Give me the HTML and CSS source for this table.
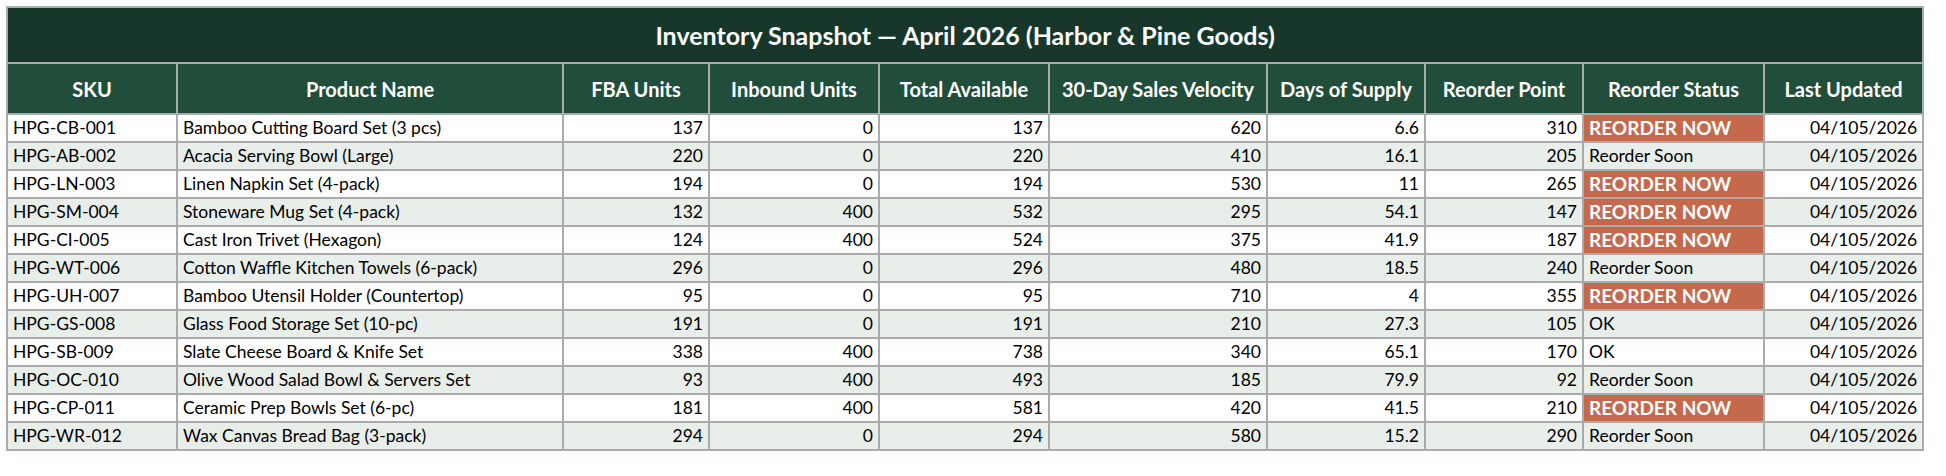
FILE: index.html
```html
<!DOCTYPE html>
<html lang="en">
<head>
<meta charset="utf-8">
<title>Inventory Snapshot</title>
<link rel="stylesheet" href="styles.css">
</head>
<body>
<table class="sheet">
  <colgroup>
    <col class="c-sku"><col class="c-name"><col class="c-fba"><col class="c-inb"><col class="c-tot">
    <col class="c-vel"><col class="c-days"><col class="c-rp"><col class="c-rs"><col class="c-upd">
  </colgroup>
  <thead>
    <tr class="title-row"><th colspan="10" class="title">Inventory Snapshot — April 2026 (Harbor &amp; Pine Goods)</th></tr>
    <tr class="head-row">
      <th>SKU</th><th>Product Name</th><th>FBA Units</th><th>Inbound Units</th><th>Total Available</th>
      <th>30-Day Sales Velocity</th><th>Days of Supply</th><th>Reorder Point</th><th>Reorder Status</th><th>Last Updated</th>
    </tr>
  </thead>
  <tbody>
    <tr><td>HPG-CB-001</td><td>Bamboo Cutting Board Set (3 pcs)</td><td class="n">137</td><td class="n">0</td><td class="n">137</td><td class="n">620</td><td class="n">6.6</td><td class="n">310</td><td class="now">REORDER NOW</td><td class="n">04/105/2026</td></tr>
    <tr><td>HPG-AB-002</td><td>Acacia Serving Bowl (Large)</td><td class="n">220</td><td class="n">0</td><td class="n">220</td><td class="n">410</td><td class="n">16.1</td><td class="n">205</td><td>Reorder Soon</td><td class="n">04/105/2026</td></tr>
    <tr><td>HPG-LN-003</td><td>Linen Napkin Set (4-pack)</td><td class="n">194</td><td class="n">0</td><td class="n">194</td><td class="n">530</td><td class="n">11</td><td class="n">265</td><td class="now">REORDER NOW</td><td class="n">04/105/2026</td></tr>
    <tr><td>HPG-SM-004</td><td>Stoneware Mug Set (4-pack)</td><td class="n">132</td><td class="n">400</td><td class="n">532</td><td class="n">295</td><td class="n">54.1</td><td class="n">147</td><td class="now">REORDER NOW</td><td class="n">04/105/2026</td></tr>
    <tr><td>HPG-CI-005</td><td>Cast Iron Trivet (Hexagon)</td><td class="n">124</td><td class="n">400</td><td class="n">524</td><td class="n">375</td><td class="n">41.9</td><td class="n">187</td><td class="now">REORDER NOW</td><td class="n">04/105/2026</td></tr>
    <tr><td>HPG-WT-006</td><td>Cotton Waffle Kitchen Towels (6-pack)</td><td class="n">296</td><td class="n">0</td><td class="n">296</td><td class="n">480</td><td class="n">18.5</td><td class="n">240</td><td>Reorder Soon</td><td class="n">04/105/2026</td></tr>
    <tr><td>HPG-UH-007</td><td>Bamboo Utensil Holder (Countertop)</td><td class="n">95</td><td class="n">0</td><td class="n">95</td><td class="n">710</td><td class="n">4</td><td class="n">355</td><td class="now">REORDER NOW</td><td class="n">04/105/2026</td></tr>
    <tr><td>HPG-GS-008</td><td>Glass Food Storage Set (10-pc)</td><td class="n">191</td><td class="n">0</td><td class="n">191</td><td class="n">210</td><td class="n">27.3</td><td class="n">105</td><td>OK</td><td class="n">04/105/2026</td></tr>
    <tr><td>HPG-SB-009</td><td>Slate Cheese Board &amp; Knife Set</td><td class="n">338</td><td class="n">400</td><td class="n">738</td><td class="n">340</td><td class="n">65.1</td><td class="n">170</td><td>OK</td><td class="n">04/105/2026</td></tr>
    <tr><td>HPG-OC-010</td><td>Olive Wood Salad Bowl &amp; Servers Set</td><td class="n">93</td><td class="n">400</td><td class="n">493</td><td class="n">185</td><td class="n">79.9</td><td class="n">92</td><td>Reorder Soon</td><td class="n">04/105/2026</td></tr>
    <tr><td>HPG-CP-011</td><td>Ceramic Prep Bowls Set (6-pc)</td><td class="n">181</td><td class="n">400</td><td class="n">581</td><td class="n">420</td><td class="n">41.5</td><td class="n">210</td><td class="now">REORDER NOW</td><td class="n">04/105/2026</td></tr>
    <tr><td>HPG-WR-012</td><td>Wax Canvas Bread Bag (3-pack)</td><td class="n">294</td><td class="n">0</td><td class="n">294</td><td class="n">580</td><td class="n">15.2</td><td class="n">290</td><td>Reorder Soon</td><td class="n">04/105/2026</td></tr>
  </tbody>
</table>
</body>
</html>
```

FILE: styles.css
```css
html, body {
  margin: 0;
  padding: 0;
  background: #ffffff;
}

body {
  padding: 6px;
  font-family: "Lato", "Open Sans", sans-serif;
  color: #000000;
}

.sheet {
  border-collapse: collapse;
  table-layout: fixed;
  width: 1918px;
}

.c-sku { width: 170px; }
.c-name { width: 386px; }
.c-fba { width: 146px; }
.c-inb { width: 170px; }
.c-tot { width: 170px; }
.c-vel { width: 218px; }
.c-days { width: 158px; }
.c-rp { width: 158px; }
.c-rs { width: 181px; }
.c-upd { width: 159px; }

.sheet th,
.sheet td {
  border: 2px solid #ababab;
  padding: 0 5px;
  white-space: nowrap;
  overflow: hidden;
}

.title {
  background: #17372b;
  color: #ffffff;
  font-weight: 700;
  font-size: 25px;
  height: 54px;
  text-align: center;
  border: 2px solid #cdd1d8;
}

.head-row th {
  background: #214d3b;
  color: #ffffff;
  font-weight: 700;
  font-size: 20px;
  height: 49px;
  text-align: center;
}

.sheet td {
  font-size: 17.5px;
  height: 26px;
  line-height: 20px;
  text-align: left;
}

.sheet tbody tr:nth-child(even) td {
  background: #e8eeea;
}

.sheet td.n {
  text-align: right;
}

.sheet tbody tr td.now {
  background: #c4694c;
  color: #ffffff;
  font-weight: 700;
  font-size: 19px;
}
```
